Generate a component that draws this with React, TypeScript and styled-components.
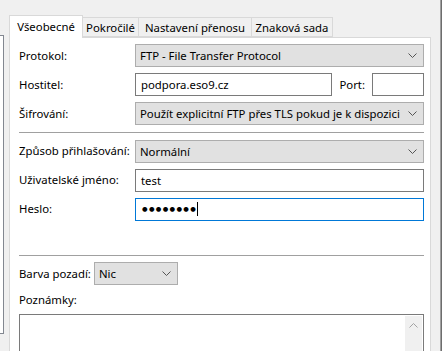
import React from "react";
import styled, { createGlobalStyle } from "styled-components";

const Global = createGlobalStyle`
  html, body { margin: 0; padding: 0; background: #f0f0f0; }
  body {
    width: 442px; height: 351px; overflow: hidden;
    font-family: "Noto Sans", "Liberation Sans", sans-serif;
    font-size: 11.35px; color: #000;
  }
  * { box-sizing: border-box; }
`;

const Page = styled.div`
  display: flex;
  width: 442px;
  height: 351px;
  overflow: hidden;
  background: #f0f0f0;
`;

const SiteList = styled.div`
  flex: none;
  margin-top: 35px;
  width: 4px;
  height: 299px;
  background: #fff;
  border: 1px solid #828790;
  border-left: none;
`;

const Dialog = styled.div`
  flex: none;
  margin-left: 5px;
  width: 422px;
  padding-top: 15px;
  display: flex;
  flex-direction: column;
`;

const TabBar = styled.div`
  display: flex;
  align-items: flex-end;
  height: 22px;
`;

const Tab = styled.div<{ $w: number; $active?: boolean }>`
  flex: none;
  width: ${(p) => p.$w}px;
  height: ${(p) => (p.$active ? 23 : 20)}px;
  margin-left: -1px;
  margin-bottom: ${(p) => (p.$active ? -1 : 0)}px;
  &:first-child { margin-left: 0; }
  position: relative;
  z-index: ${(p) => (p.$active ? 2 : 1)};
  background: ${(p) => (p.$active ? "#fff" : "#f0f0f0")};
  border: 1px solid #d9d9d9;
  border-bottom: ${(p) => (p.$active ? "none" : "1px solid #d9d9d9")};
  display: flex;
  align-items: center;
  justify-content: center;
  padding-bottom: ${(p) => (p.$active ? 2 : 0)}px;
  white-space: nowrap;
`;

const Panel = styled.div`
  flex: 1;
  background: #fff;
  border: 1px solid #d9d9d9;
  padding: 6px 6px 0 9px;
  display: flex;
  flex-direction: column;
  min-height: 320px;
`;

const Grid = styled.div`
  display: grid;
  grid-template-columns: 116px 1fr;
  row-gap: 6px;
  align-items: center;
`;

const Label = styled.div`
  white-space: nowrap;
  line-height: 16px;
`;

const Combo = styled.div<{ $w?: number }>`
  height: 23px;
  ${(p) => (p.$w ? `width: ${p.$w}px; flex: none;` : "")}
  background: #e1e1e1;
  border: 1px solid #adadad;
  display: flex;
  align-items: center;
  padding: 0 6px 0 4px;
  white-space: nowrap;
  & > span { flex: 1; overflow: hidden; }
`;

const Input = styled.div<{ $focused?: boolean; $w?: number }>`
  height: 23px;
  ${(p) => (p.$w ? `width: ${p.$w}px; flex: none;` : "flex: 1;")}
  background: #fff;
  border: 1px solid ${(p) => (p.$focused ? "#0078d7" : "#7a7a7a")};
  display: flex;
  align-items: center;
  padding: 0 5px;
  white-space: nowrap;
`;

const HostRow = styled.div`
  display: flex;
  align-items: center;
  gap: 7px;
`;

const Separator = styled.div<{ $top: number; $bottom: number }>`
  height: 1px;
  background: #a0a0a0;
  margin: ${(p) => p.$top}px 0 ${(p) => p.$bottom}px;
`;

const Dots = styled.span`
  font-family: "DejaVu Sans", sans-serif;
  font-size: 6.4px;
  letter-spacing: 1.3px;
  margin-left: 1px;
`;

const Caret = styled.span`
  display: inline-block;
  width: 1px;
  height: 14px;
  background: #000;
`;

const Spacer = styled.div<{ $h: number }>`
  height: ${(p) => p.$h}px;
  flex: none;
`;

const InlineRow = styled.div`
  display: flex;
  align-items: center;
  gap: 3px;
`;

const NotesLabel = styled.div`
  margin-top: 7px;
  line-height: 16px;
`;

const TextArea = styled.div`
  margin-top: 6px;
  height: 60px;
  border: 1px solid #7a7a7a;
  background: #fff;
  display: flex;
  justify-content: flex-end;
  padding: 1px;
`;

const ScrollBar = styled.div`
  width: 17px;
  background: #f0f0f0;
  display: flex;
  justify-content: center;
  padding-top: 7px;
`;

const RightEdge = styled.div`
  flex: none;
  margin-left: 9px;
  width: 2px;
  border-left: 1px solid #a0a0a0;
  border-right: 1px solid #6d6d6d;
`;

const Chevron = ({ up }: { up?: boolean }) => (
  <svg width="9" height="5" viewBox="0 0 9 5">
    <polyline
      points={up ? "0.5,4.5 4.5,0.5 8.5,4.5" : "0.5,0.5 4.5,4.5 8.5,0.5"}
      fill="none"
      stroke={up ? "#a3a3a3" : "#555"}
      strokeWidth="1"
    />
  </svg>
);

const Select = ({ value, w }: { value: string; w?: number }) => (
  <Combo $w={w}>
    <span>{value}</span>
    <Chevron />
  </Combo>
);

export default function App() {
  return (
    <>
      <Global />
      <Page>
        <SiteList />
        <Dialog>
          <TabBar>
            <Tab $w={74} $active>Všeobecné</Tab>
            <Tab $w={57}>Pokročilé</Tab>
            <Tab $w={114}>Nastavení přenosu</Tab>
            <Tab $w={82}>Znaková sada</Tab>
          </TabBar>
          <Panel>
            <Grid>
              <Label>Protokol:</Label>
              <Select value="FTP - File Transfer Protocol" />
              <Label>Hostitel:</Label>
              <HostRow>
                <Input>podpora.eso9.cz</Input>
                <Label>Port:</Label>
                <Input $w={52} />
              </HostRow>
              <Label>Šifrování:</Label>
              <Select value="Použít explicitní FTP přes TLS pokud je k dispozici" />
            </Grid>
            <Separator $top={7} $bottom={7} />
            <Grid>
              <Label>Způsob přihlašování:</Label>
              <Select value="Normální" />
              <Label>Uživatelské jméno:</Label>
              <Input>test</Input>
              <Label>Heslo:</Label>
              <Input $focused>
                <Dots>●●●●●●●●</Dots>
                <Caret />
              </Input>
            </Grid>
            <Spacer $h={34} />
            <Separator $top={0} $bottom={7} />
            <InlineRow>
              <Label>Barva pozadí:</Label>
              <Select value="Nic" w={84} />
            </InlineRow>
            <NotesLabel>Poznámky:</NotesLabel>
            <TextArea>
              <ScrollBar>
                <Chevron up />
              </ScrollBar>
            </TextArea>
          </Panel>
        </Dialog>
        <RightEdge />
      </Page>
    </>
  );
}
